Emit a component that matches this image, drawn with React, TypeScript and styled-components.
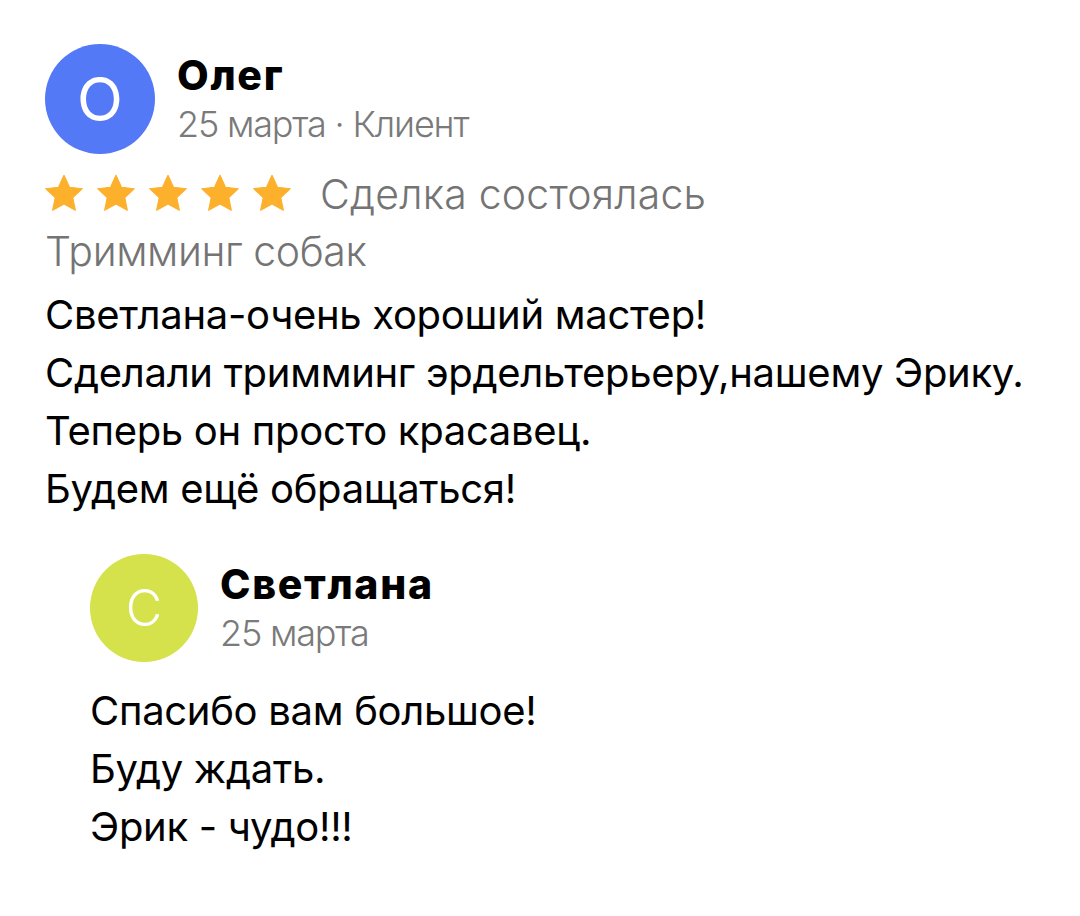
import React from "react";
import styled, { createGlobalStyle } from "styled-components";

const Global = createGlobalStyle`
  html, body { margin: 0; padding: 0; background: #ffffff; }
  body { font-family: Inter, "Noto Sans", sans-serif; color: #000; }
`;

const Page = styled.div`
  padding: 44px 0 0 45px;
  display: flex;
  flex-direction: column;
`;

const Header = styled.div`
  display: flex;
  align-items: center;
  gap: 22px;
`;

const Avatar = styled.div<{ $bg: string; $size: number; $font: number; $weight: number }>`
  width: ${(p) => p.$size}px;
  height: ${(p) => p.$size}px;
  border-radius: 50%;
  background: ${(p) => p.$bg};
  color: #fff;
  display: flex;
  align-items: center;
  justify-content: center;
  font-family: Inter, sans-serif;
  font-size: ${(p) => p.$font}px;
  font-weight: ${(p) => p.$weight};
  line-height: 1;
  flex-shrink: 0;
`;

const Meta = styled.div`
  display: flex;
  flex-direction: column;
  gap: 5px;
`;

const Name = styled.div`
  font-family: Inter, sans-serif;
  font-weight: 800;
  font-size: 41px;
  line-height: 44px;
  letter-spacing: 1.7px;
`;

const Sub = styled.div`
  font-family: Inter, sans-serif;
  font-weight: 300;
  font-size: 36px;
  line-height: 44px;
  color: #7a7a7a;
  letter-spacing: -1.2px;
`;

const RatingRow = styled.div`
  display: flex;
  align-items: center;
  margin-top: 18px;
  height: 44px;
`;

const Stars = styled.div`
  display: flex;
  gap: 8px;
  margin-left: -3px;
  margin-right: 26px;
`;

const StatusText = styled.span`
  font-family: Inter, sans-serif;
  font-weight: 300;
  font-size: 41px;
  color: #747474;
  letter-spacing: 0.2px;
`;

const Service = styled.div`
  font-family: Inter, sans-serif;
  font-weight: 300;
  font-size: 41px;
  line-height: 57px;
  color: #747474;
  letter-spacing: -0.4px;
  margin-top: 7px;
`;

const Body = styled.div<{ $top: number }>`
  margin-top: ${(p) => p.$top}px;
  font-family: Inter, sans-serif;
  font-weight: 400;
  font-size: 40px;
  line-height: 58px;
  letter-spacing: -0.3px;
  color: #000;
`;

const Line = styled.div``;

const Reply = styled.div`
  margin-left: 45px;
  margin-top: 36px;
  display: flex;
  flex-direction: column;
`;

const Star = () => (
  <svg width="44" height="44" viewBox="0 0 24 24">
    <path
      d="M12 1.8l3 6.5 7 .8-5.2 4.8 1.4 7L12 17.4l-6.2 3.5 1.4-7L2 9.1l7-.8z"
      fill="#FDB02B"
      stroke="#FDB02B"
      strokeWidth="0.6"
      strokeLinejoin="round"
    />
  </svg>
);

export default function App() {
  return (
    <>
      <Global />
      <Page>
        <Header>
          <Avatar $bg="#5479F6" $size={110} $font={60} $weight={400}>О</Avatar>
          <Meta>
            <Name>Олег</Name>
            <Sub>25 марта · Клиент</Sub>
          </Meta>
        </Header>
        <RatingRow>
          <Stars>
            {[0, 1, 2, 3, 4].map((i) => (
              <Star key={i} />
            ))}
          </Stars>
          <StatusText>Сделка состоялась</StatusText>
        </RatingRow>
        <Service>Тримминг собак</Service>
        <Body $top={6}>
          <Line>Светлана-очень хороший мастер!</Line>
          <Line>Сделали тримминг эрдельтерьеру,нашему Эрику.</Line>
          <Line>Теперь он просто красавец.</Line>
          <Line>Будем ещё обращаться!</Line>
        </Body>
        <Reply>
          <Header>
            <Avatar $bg="#D5E24B" $size={108} $font={50} $weight={300}>С</Avatar>
            <Meta>
              <Name>Светлана</Name>
              <Sub>25 марта</Sub>
            </Meta>
          </Header>
          <Body $top={20}>
            <Line>Спасибо вам большое!</Line>
            <Line>Буду ждать.</Line>
            <Line>Эрик - чудо!!!</Line>
          </Body>
        </Reply>
      </Page>
    </>
  );
}
